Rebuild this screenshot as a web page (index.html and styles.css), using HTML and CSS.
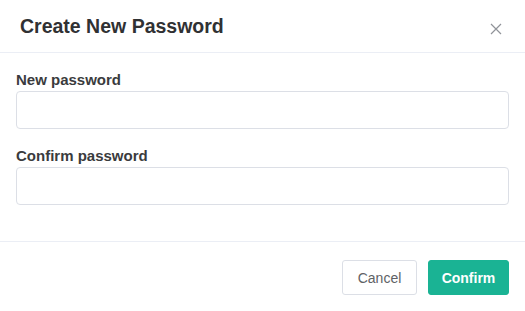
FILE: index.html
```html
<!DOCTYPE html>
<html>
<head>
<meta charset="utf-8">
<link rel="stylesheet" href="styles.css">
</head>
<body>
<div class="dialog">
  <div class="header">
    <div class="title">Create New Password</div>
    <button class="close" aria-label="Close">
      <svg width="12" height="12" viewBox="0 0 12 12"><path d="M1 1L11 11M11 1L1 11" stroke="#909399" stroke-width="1.2" fill="none"/></svg>
    </button>
  </div>
  <div class="body">
    <div class="field">
      <label class="label">New password</label>
      <input class="input" type="password">
    </div>
    <div class="field">
      <label class="label">Confirm password</label>
      <input class="input" type="password">
    </div>
  </div>
  <div class="footer">
    <button class="btn btn-cancel">Cancel</button>
    <button class="btn btn-confirm">Confirm</button>
  </div>
</div>
</body>
</html>
```
FILE: styles.css
```css
html, body { margin: 0; padding: 0; background: #fff; }
body { font-family: "Liberation Sans", Arial, sans-serif; width: 525px; height: 311px; overflow: hidden; }
.dialog { display: flex; flex-direction: column; }
.header {
  height: 53px; box-sizing: border-box; border-bottom: 1px solid #ebeef5;
  display: flex; align-items: flex-start; justify-content: space-between;
  padding: 15px 23px 0 20px;
}
.title { font-size: 19.5px; line-height: 22px; font-weight: bold; color: #303133; }
.close { border: 0; background: none; padding: 0; width: 12px; height: 12px; display: flex; margin-top: 8px; }
.body { padding: 19px 16px 36px; border-bottom: 1px solid #ebeef5; display: flex; flex-direction: column; gap: 19px; }
.field { display: flex; flex-direction: column; gap: 3px; }
.label { font-size: 15px; font-weight: bold; color: #3a3b3d; line-height: 16px; }
.input { height: 38px; box-sizing: border-box; border: 1px solid #dcdfe6; border-radius: 4px; outline: none; font-size: 14px; padding: 0 12px; margin: 0; }
.footer { display: flex; justify-content: flex-end; gap: 11px; padding: 18px 16px; }
.btn { height: 35px; box-sizing: border-box; border-radius: 3px; font-family: "Liberation Sans", Arial, sans-serif; font-size: 14px; cursor: pointer; margin: 0; }
.btn-cancel { width: 75px; background: #fff; border: 1px solid #dcdfe6; color: #606266; }
.btn-confirm { width: 81px; background: #1ab394; border: 1px solid #1ab394; color: #fff; font-weight: bold; }
```
